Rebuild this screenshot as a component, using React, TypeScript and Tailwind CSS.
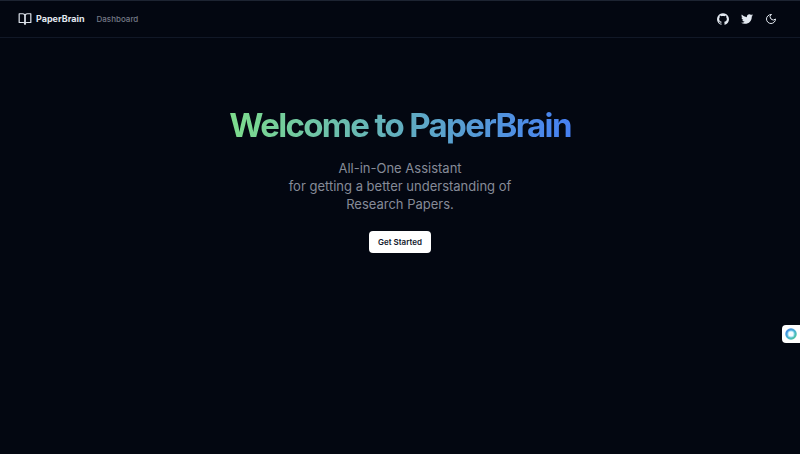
import { FaTwitter } from "react-icons/fa";

function BookIcon() {
  return (
    <svg viewBox="0 0 24 24" className="size-[14px] fill-none stroke-current stroke-2" strokeLinecap="round" strokeLinejoin="round" aria-hidden="true">
      <path d="M2 3h6a4 4 0 0 1 4 4v14a3 3 0 0 0-3-3H2z" />
      <path d="M22 3h-6a4 4 0 0 0-4 4v14a3 3 0 0 1 3-3h7z" />
    </svg>
  );
}

function MoonIcon() {
  return (
    <svg viewBox="0 0 24 24" className="size-3 fill-none stroke-current stroke-2" strokeLinecap="round" strokeLinejoin="round" aria-hidden="true">
      <path d="M12 3a6 6 0 0 0 9 9 9 9 0 1 1-9-9Z" />
    </svg>
  );
}

function GitHubIcon() {
  return (
    <svg viewBox="0 0 438.549 438.549" className="size-3 fill-current" aria-hidden="true">
      <path d="M409.132 114.573c-19.608-33.596-46.205-60.194-79.798-79.8-33.598-19.607-70.277-29.408-110.063-29.408-39.781 0-76.472 9.804-110.063 29.408-33.596 19.605-60.192 46.204-79.8 79.8C9.803 148.168 0 184.854 0 224.63c0 47.78 13.94 90.745 41.827 128.906 27.884 38.164 63.906 64.572 108.063 79.227 5.14.954 8.945.283 11.419-1.996 2.475-2.282 3.711-5.14 3.711-8.562 0-.571-.049-5.708-.144-15.417a2549.81 2549.81 0 01-.144-25.406l-6.567 1.136c-4.187.767-9.469 1.092-15.846 1-6.374-.089-12.991-.757-19.842-1.999-6.854-1.231-13.229-4.086-19.13-8.559-5.898-4.473-10.085-10.328-12.56-17.556l-2.855-6.57c-1.903-4.374-4.899-9.233-8.992-14.559-4.093-5.331-8.232-8.945-12.419-10.848l-1.999-1.431c-1.332-.951-2.568-2.098-3.711-3.429-1.142-1.331-1.997-2.663-2.568-3.997-.572-1.335-.098-2.43 1.427-3.289 1.525-.859 4.281-1.276 8.28-1.276l5.708.853c3.807.763 8.516 3.042 14.133 6.851 5.614 3.806 10.229 8.754 13.846 14.842 4.38 7.806 9.657 13.754 15.846 17.847 6.184 4.093 12.419 6.136 18.699 6.136 6.28 0 11.704-.476 16.274-1.423 4.565-.952 8.848-2.383 12.847-4.285 1.713-12.758 6.377-22.559 13.988-29.41-10.848-1.14-20.601-2.857-29.264-5.14-8.658-2.286-17.605-5.996-26.835-11.14-9.235-5.137-16.896-11.516-22.985-19.126-6.09-7.614-11.088-17.61-14.987-29.979-3.901-12.374-5.852-26.648-5.852-42.826 0-23.035 7.52-42.637 22.557-58.817-7.044-17.318-6.379-36.732 1.997-58.24 5.52-1.715 13.706-.428 24.554 3.853 10.85 4.283 18.794 7.952 23.84 10.994 5.046 3.041 9.089 5.618 12.135 7.708 17.705-4.947 35.976-7.421 54.818-7.421s37.117 2.474 54.823 7.421l10.849-6.849c7.419-4.57 16.18-8.758 26.262-12.565 10.088-3.805 17.802-4.853 23.134-3.138 8.562 21.509 9.325 40.922 2.279 58.24 15.036 16.18 22.559 35.787 22.559 58.817 0 16.178-1.958 30.497-5.853 42.966-3.9 12.471-8.941 22.457-15.125 29.979-6.191 7.521-13.901 13.85-23.131 18.986-9.232 5.14-18.182 8.85-26.84 11.136-8.662 2.286-18.415 4.004-29.263 5.146 9.894 8.562 14.842 22.077 14.842 40.539v60.237c0 3.422 1.19 6.279 3.572 8.562 2.379 2.279 6.136 2.95 11.276 1.995 44.163-14.653 80.185-41.062 108.068-79.226 27.88-38.161 41.825-81.126 41.825-128.906-.01-39.771-9.818-76.454-29.414-110.049z" />
    </svg>
  );
}

function AssistantLogo() {
  return (
    <svg viewBox="0 0 24 24" className="size-3" aria-hidden="true">
      <defs>
        <linearGradient id="ring" x1="0" y1="0" x2="1" y2="1">
          <stop offset="0" stopColor="#3f78ea" />
          <stop offset=".5" stopColor="#45b0d4" />
          <stop offset="1" stopColor="#4fcf8b" />
        </linearGradient>
      </defs>
      <circle cx="12" cy="12" r="11.5" fill="url(#ring)" />
      <circle cx="12" cy="12" r="7" fill="#a4e0f2" />
      <circle cx="12" cy="12" r="5" fill="#f4fcff" />
    </svg>
  );
}

export default function App() {
  return (
    <div className="min-h-screen bg-[#030711] font-['Inter',sans-serif] text-slate-200">
      <header className="flex h-[38px] items-center border-t border-b border-t-[#1d2432] border-b-[#111827] px-[18px]">
        <a href="#home" className="flex items-center gap-1">
          <BookIcon />
          <span className="text-[9px] leading-4 font-bold">PaperBrain</span>
        </a>
        <nav className="ml-3 flex">
          <a href="#dashboard" className="text-[8px] leading-4 font-medium text-[#747986]">Dashboard</a>
        </nav>
        <div className="ml-auto flex items-center gap-3 pr-[5px]">
          <a href="#github" aria-label="GitHub"><GitHubIcon /></a>
          <a href="#twitter" aria-label="Twitter"><FaTwitter className="size-3" /></a>
          <button type="button" aria-label="Toggle theme"><MoonIcon /></button>
        </div>
      </header>
      <main className="flex flex-col items-center px-4 pt-[66px] text-center">
        <h1 className="bg-linear-to-r/srgb from-[#7ddc8c] to-[#4680f3] bg-clip-text text-[33px] leading-[42px] font-bold tracking-tighter text-transparent">
          Welcome to PaperBrain
        </h1>
        <p className="mt-[13px] text-[13px] leading-[18px] text-[#868b98]">
          All-in-One Assistant
          <br />
          for getting a better understanding of
          <br />
          Research Papers.
        </p>
        <button type="button" className="mt-[18px] h-[22px] rounded bg-white px-[9px] text-[8px] font-semibold text-slate-900">
          Get Started
        </button>
      </main>
      <button type="button" aria-label="Open assistant" className="fixed top-[325px] right-0 flex h-[18px] w-[18px] items-center justify-center rounded-l bg-white">
        <AssistantLogo />
      </button>
    </div>
  );
}
